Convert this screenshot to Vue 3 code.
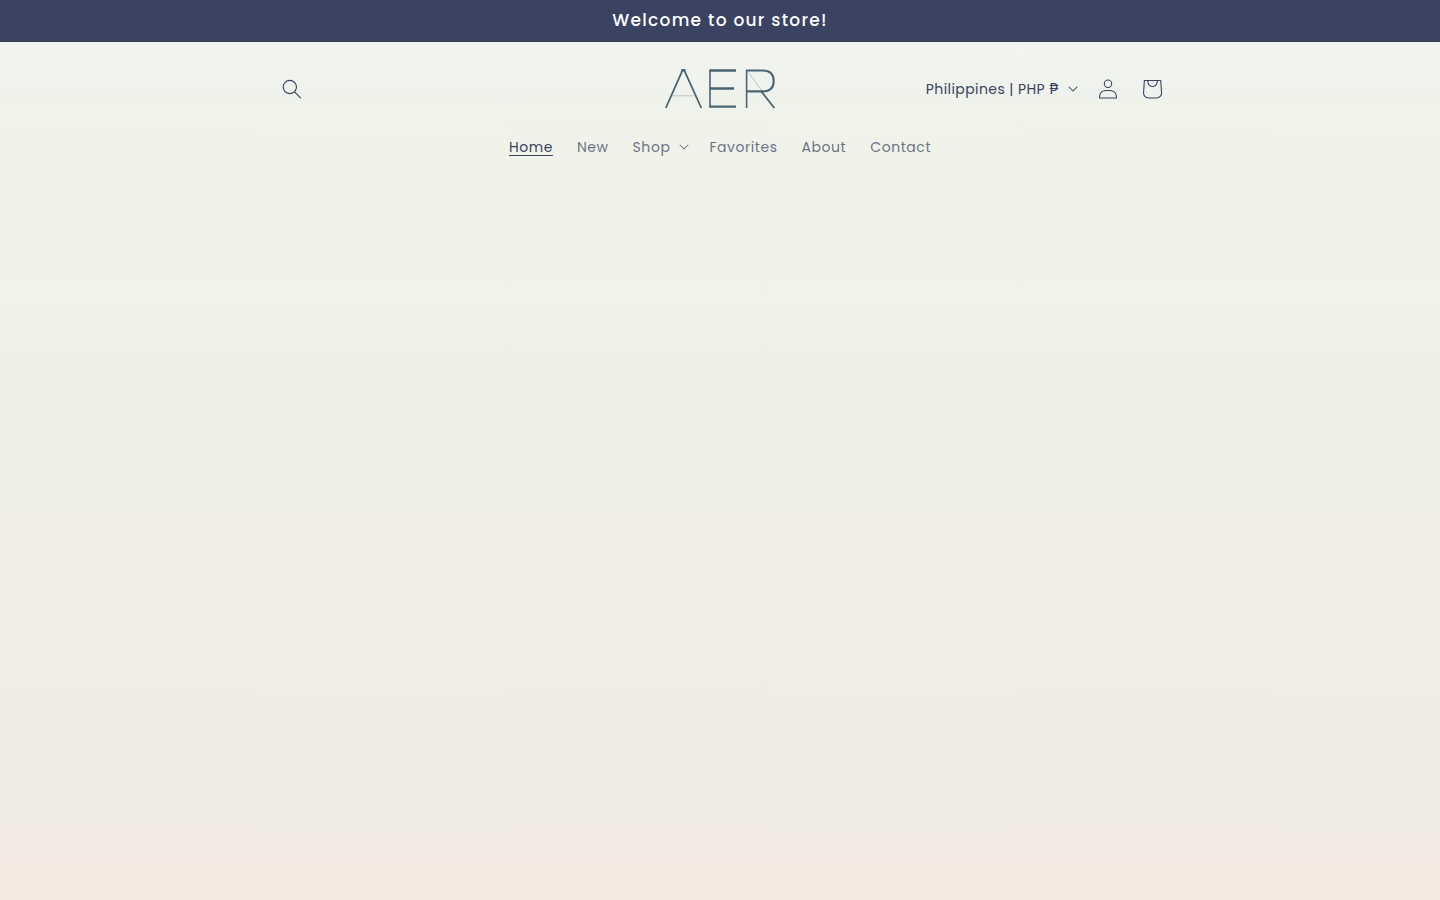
<script setup>
const links = [
  { label: 'Home', current: true },
  { label: 'New' },
  { label: 'Shop', menu: true },
  { label: 'Favorites' },
  { label: 'About' },
  { label: 'Contact' },
]
const caret =
  'M9.354.646a.5.5 0 00-.708 0L5 4.293 1.354.646a.5.5 0 00-.708.708l4 4a.5.5 0 00.708 0l4-4a.5.5 0 000-.708z'
</script>

<template>
  <div class="page">
    <div class="announcement" role="region" aria-label="Announcement">
      <p>Welcome to our store!</p>
    </div>
    <header class="header">
      <div class="bar">
        <button class="icon search" type="button" aria-label="Search">
          <svg width="20" height="20" viewBox="0 0 18 19" aria-hidden="true">
            <path fill-rule="evenodd" d="M11.03 11.68A5.784 5.784 0 112.85 3.5a5.784 5.784 0 018.18 8.18zm.26 1.12a6.78 6.78 0 11.72-.7l5.4 5.4a.5.5 0 11-.71.7l-5.41-5.4z" />
          </svg>
        </button>
        <a class="logo" href="#" aria-label="AER">
          <svg width="112" height="42" viewBox="0 0 112 42" fill="none" stroke="#4b6472" aria-hidden="true">
            <path d="M8 27.800h22M84 4l14 19" stroke="#bcc8c6" />
            <path d="M1.800 40 18.500 2.500h1.800L37.300 40" stroke-width="1.800" />
            <path d="M17.500 2h4" stroke-width="2" />
            <path d="M46 2v37.500M82.600 2v38" stroke-width="1.600" />
            <path d="M45.500 2.500H72M45.500 20.500H70M45.500 38.700H72" stroke-width="2.300" />
            <path d="M82 2.500h16.500c7.500 0 11.200 4 11.200 10.500s-3.700 10.400-11.200 10.400H82" stroke-width="2.100" />
            <path d="M97 23 110.300 40" stroke-width="1.800" />
          </svg>
        </a>
        <div class="tools">
          <button class="country" type="button" aria-label="Country/region: Philippines, PHP ₱">
            <span>Philippines | PHP ₱</span>
            <svg width="10" height="6" viewBox="0 0 10 6" aria-hidden="true"><path :d="caret" /></svg>
          </button>
          <a class="icon" href="#" aria-label="Log in">
            <svg width="20" height="20" viewBox="0 0 18 19" aria-hidden="true">
              <path fill-rule="evenodd" d="M6 4.5a3 3 0 116 0 3 3 0 01-6 0zm3-4a4 4 0 100 8 4 4 0 000-8zm5.58 12.15c1.12.82 1.83 2.24 1.91 4.85H1.51c.08-2.6.79-4.03 1.9-4.85C4.66 11.75 6.5 11.5 9 11.5s4.35.26 5.58 1.15zM9 10.5c-2.5 0-4.65.24-6.17 1.35C1.27 12.98.5 14.93.5 18v.5h17V18c0-3.07-.77-5.02-2.33-6.15-1.52-1.1-3.67-1.35-6.17-1.35z" />
            </svg>
          </a>
          <a class="icon" href="#" aria-label="Cart">
            <svg width="44" height="44" viewBox="0 0 40 40" aria-hidden="true">
              <path fill-rule="evenodd" d="M15.75 11.8h-3.16l-.77 11.6a5 5 0 0 0 4.99 5.34h7.38a5 5 0 0 0 4.99-5.33L28.4 11.8zm0 1h-2.22l-.71 10.67a4 4 0 0 0 3.99 4.27h7.38a4 4 0 0 0 4-4.27l-.72-10.67h-2.22v.63a4.75 4.75 0 1 1-9.5 0zm8.5 0h-7.5v.63a3.75 3.75 0 1 0 7.5 0z" />
            </svg>
          </a>
        </div>
      </div>
      <nav class="nav" aria-label="Main">
        <ul>
          <li v-for="link in links" :key="link.label">
            <button v-if="link.menu" class="link menu" type="button" aria-expanded="false">
              <span>{{ link.label }}</span>
              <svg width="10" height="6" viewBox="0 0 10 6" aria-hidden="true"><path :d="caret" /></svg>
            </button>
            <a v-else class="link" :class="{ current: link.current }" href="#" :aria-current="link.current ? 'page' : null">{{ link.label }}</a>
          </li>
        </ul>
      </nav>
    </header>
  </div>
</template>

<style>
body {
  margin: 0;
}
</style>

<style scoped>
.page {
  min-height: 100vh;
  box-sizing: border-box;
  background: linear-gradient(
    #f1f4ef 0%, #f1f4ef 5%, #eff2ed 10%, #f0f3e9 12%, #f1f2ea 34%,
    #f0f0e8 36%, #eeefe6 56%, #f2ede7 58%, #f0ebe5 92%, #f3e9e4 93%,
    #f3e9e3 95%, #f3e9e0 97%
  );
  color: #3a4360;
  font-family: Poppins, Inter, "Noto Sans", "DejaVu Sans", sans-serif;
  font-size: 14px;
  line-height: 20px;
}
.announcement {
  background: #3a4362;
  border-bottom: 1px solid #353f58;
  color: #fff;
  text-align: center;
}
.announcement p {
  margin: 0;
  padding: 8px 16px 9px;
  font-size: 17px;
  font-weight: 500;
  line-height: 24px;
  letter-spacing: 0.075em;
}
.header {
  max-width: 908px;
  margin: 0 auto;
  padding: 20px 0;
}
.bar {
  display: grid;
  grid-template-columns: 1fr auto 1fr;
  align-items: center;
}
.icon {
  display: flex;
  align-items: center;
  justify-content: center;
  width: 44px;
  height: 44px;
  padding: 0;
  border: 0;
  background: none;
  color: inherit;
}
.search {
  margin-left: 4px;
}
svg {
  display: block;
  flex: none;
}
.icon svg,
.country svg,
.link svg {
  fill: currentColor;
}
.logo {
  padding: 6px 0;
}
.tools {
  display: flex;
  align-items: center;
  justify-content: flex-end;
}
button {
  font: inherit;
  cursor: pointer;
}
.country {
  display: flex;
  align-items: center;
  gap: 9px;
  margin-right: 8px;
  padding: 12px 0;
  border: 0;
  background: none;
  color: inherit;
  letter-spacing: 0.03em;
  white-space: nowrap;
}
.nav ul {
  display: flex;
  flex-wrap: wrap;
  justify-content: center;
  margin: 9px 0 0;
  padding: 0;
  list-style: none;
}
.link {
  display: flex;
  align-items: center;
  gap: 9px;
  padding: 12px;
  border: 0;
  background: none;
  color: #6c7587;
  letter-spacing: 0.04em;
  text-decoration: none;
}
.menu {
  padding-right: 8px;
}
.current {
  color: #3a4360;
  text-decoration: underline;
  text-underline-offset: 3px;
}
</style>
